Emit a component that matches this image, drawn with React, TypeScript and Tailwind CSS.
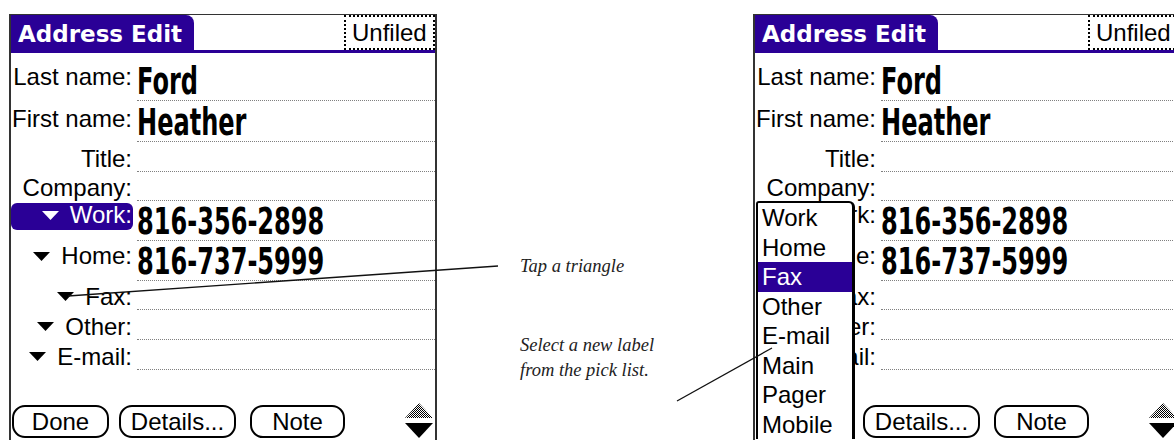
import React from "react";

type Row = {
  label: string;
  value?: string;
  tri?: boolean;
  big?: boolean;
  selected?: boolean;
  h: string;
  mb: string;
};

const rows: Row[] = [
  { label: "Last name:", value: "Ford", big: true, h: "h-[48px]", mb: "mb-[9px]" },
  { label: "First name:", value: "Heather", big: true, h: "h-[41px]", mb: "mb-[8px]" },
  { label: "Title:", h: "h-[30px]", mb: "mb-[1px]" },
  { label: "Company:", h: "h-[29px]", mb: "mb-[1px]" },
  { label: "Work:", value: "816-356-2898", tri: true, big: true, selected: true, h: "h-[40px]", mb: "mb-[11px]" },
  { label: "Home:", value: "816-737-5999", tri: true, big: true, h: "h-[40px]", mb: "mb-[10px]" },
  { label: "Fax:", tri: true, h: "h-[29px]", mb: "mb-[1px]" },
  { label: "Other:", tri: true, h: "h-[30px]", mb: "mb-[1px]" },
  { label: "E-mail:", tri: true, h: "h-[30px]", mb: "mb-[1px]" },
];

const picks = ["Work", "Home", "Fax", "Other", "E-mail", "Main", "Pager", "Mobile"];

function Triangle() {
  return (
    <svg width="17" height="9" viewBox="0 0 17 9" className="shrink-0">
      <polygon points="0,0 17,0 8.5,9" fill="currentColor" />
    </svg>
  );
}

function Screen({ withPopup }: { withPopup?: boolean }) {
  const dith = withPopup ? "dith2" : "dith1";
  return (
    <div className="relative mt-[14px] h-[430px] w-[428px] shrink-0 border-x-2 border-t border-[#333] bg-white font-['Liberation_Sans',Arial,sans-serif] text-black">
      {/* title bar */}
      <div className="flex h-[35px] items-start justify-between">
        <div className="flex h-[35px] w-[183px] items-center rounded-tr-[8px] bg-[#2a0096] pl-[7px] pt-[3px] font-['DejaVu_Sans',sans-serif] text-[23px] font-bold text-white">
          Address Edit
        </div>
        <div className="flex h-[35px] w-[91px] items-center border-2 border-dotted border-black pl-[6px] text-[24px] leading-none">
          Unfiled
        </div>
      </div>
      <div className="h-[3px] bg-[#2a0096]" />

      {rows.map((r) => (
        <div key={r.label} className={`flex items-end ${r.h}`}>
          <div
            className={`flex w-[122px] shrink-0 items-center justify-end gap-[11px] pr-[1px] text-[24px] leading-[24px] ${r.mb} ${
              r.big ? "h-[27px] pb-[3px] items-end rounded-[6px]" : ""
            } ${r.selected && !withPopup ? "bg-[#2a0096] text-white" : ""}`}
          >
            {r.tri && (
              <span className={r.big ? "mb-[7px]" : "mb-[1px]"}>
                <Triangle />
              </span>
            )}
            <span>{r.label}</span>
          </div>
          <div className="ml-[4px] flex h-full flex-1 items-end border-b border-dotted border-[#808080]">
            {r.value && (
              <span className="inline-block origin-bottom-left scale-x-[0.65] font-['DejaVu_Sans',sans-serif] text-[37px] font-bold leading-none">
                {r.value}
              </span>
            )}
          </div>
        </div>
      ))}

      {/* buttons */}
      <div className="mt-[35px] flex items-start text-[24px] leading-none">
        <div className="ml-[1px] flex h-[33px] w-[97px] items-center justify-center rounded-[13px] border-2 border-black">Done</div>
        <div className="ml-[10px] flex h-[33px] w-[117px] items-center justify-center rounded-[13px] border-2 border-black">Details...</div>
        <div className="ml-[14px] flex h-[33px] w-[95px] items-center justify-center rounded-[13px] border-2 border-black">Note</div>
        <div className="ml-auto mr-[2px] mt-[-2px] flex flex-col gap-[5px]">
          <svg width="28" height="15" viewBox="0 0 28 15">
            <defs>
              <pattern id={dith} width="2" height="2" patternUnits="userSpaceOnUse">
                <rect width="2" height="2" fill="#fff" />
                <rect width="1" height="1" fill="#000" />
                <rect x="1" y="1" width="1" height="1" fill="#000" />
              </pattern>
            </defs>
            <polygon points="0,15 14,0 28,15" fill={`url(#${dith})`} />
          </svg>
          <svg width="28" height="15" viewBox="0 0 28 15">
            <polygon points="0,0 28,0 14,15" fill="#000" />
          </svg>
        </div>
      </div>

      {withPopup && (
        <div className="absolute left-[1px] top-[186px] w-[99px] rounded-tl-[3px] rounded-tr-[6px] border-l-2 border-r-[3px] border-t-2 border-black bg-white">
          {picks.map((p) => (
            <div
              key={p}
              className={`h-[29.5px] pl-[4px] text-[24px] leading-[29.5px] ${p === "Fax" ? "bg-[#2a0096] text-white" : ""}`}
            >
              {p}
            </div>
          ))}
        </div>
      )}
    </div>
  );
}

export default function App() {
  return (
    <div className="relative h-[440px] w-[1174px] overflow-hidden bg-white">
      <div className="flex pl-[9px]">
        <Screen />
        <div className="flex w-[316px] shrink-0 flex-col pl-[83px] pt-[254px] font-['Liberation_Serif',serif] text-[18.5px] italic leading-[25px] text-[#222]">
          <p>Tap a triangle</p>
          <p className="mt-[54px]">
            Select a new label
            <br />
            from the pick list.
          </p>
        </div>
        <Screen withPopup />
      </div>

      {/* callout lines */}
      <svg className="pointer-events-none absolute inset-0" width="1174" height="440">
        <line x1="68" y1="296" x2="498" y2="266" stroke="#111" strokeWidth="1.3" />
        <line x1="677" y1="401" x2="772" y2="348" stroke="#111" strokeWidth="1.3" />
      </svg>
    </div>
  );
}
